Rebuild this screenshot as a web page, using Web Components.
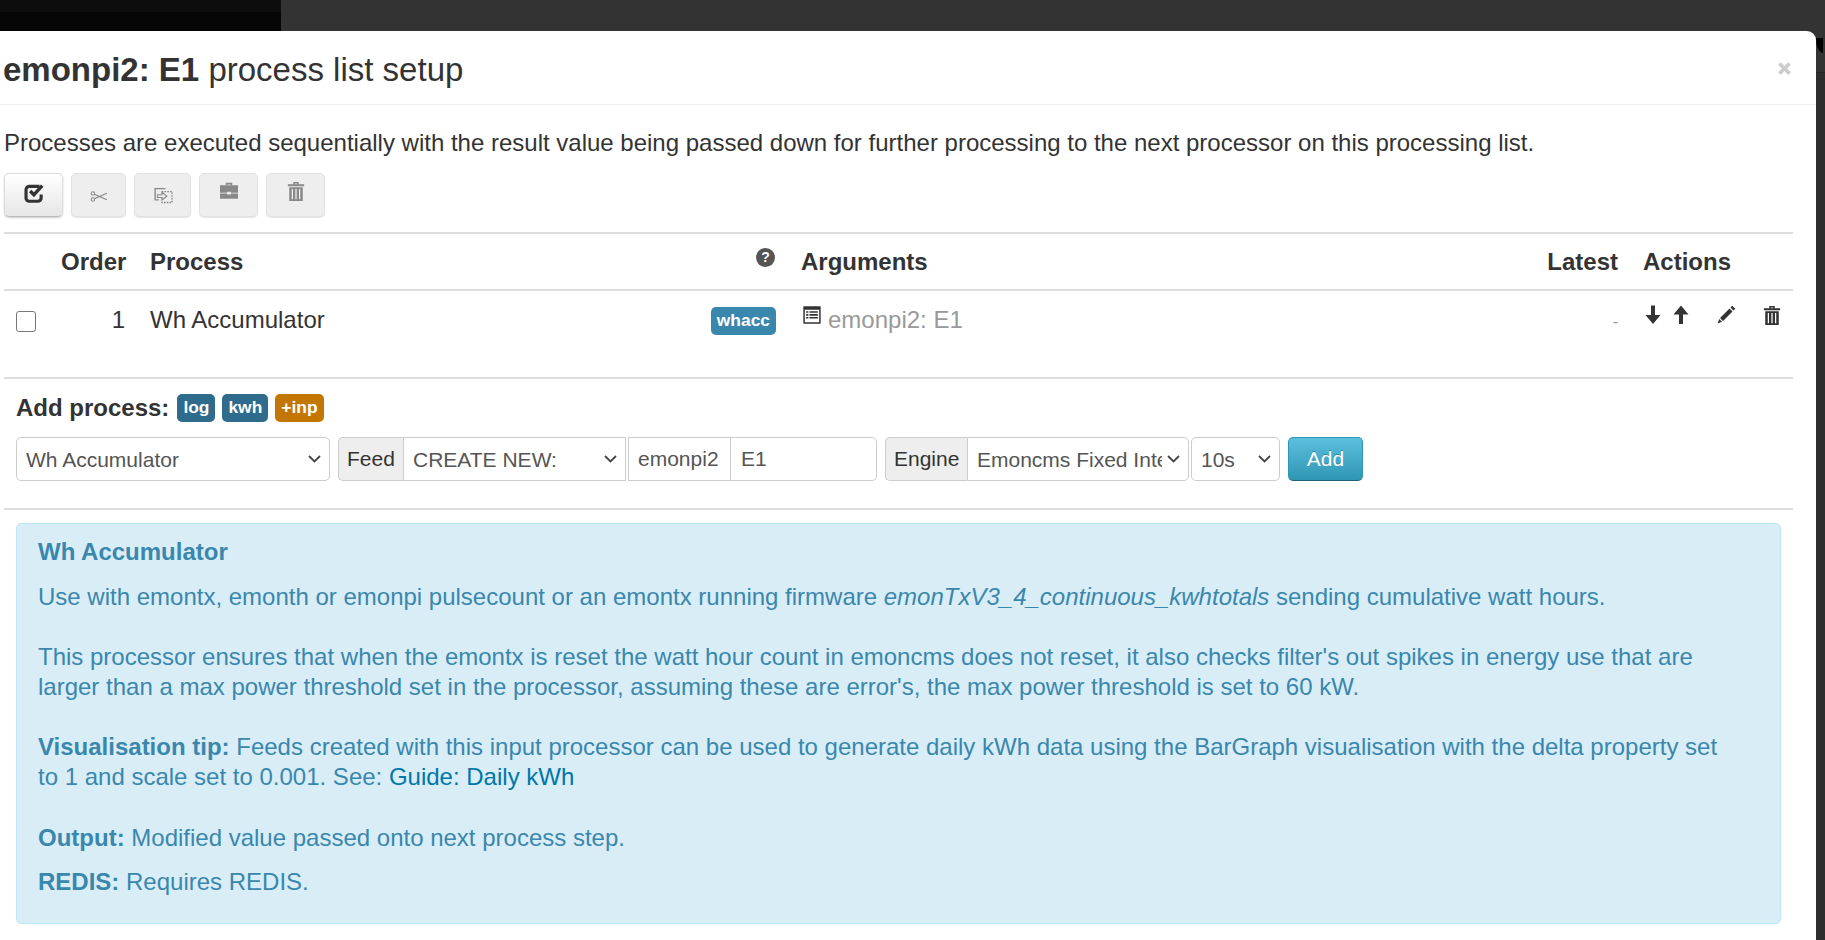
<!DOCTYPE html>
<html lang="en">
<head>
<meta charset="utf-8">
<title>emonpi2: E1 process list setup</title>
<style>
  html, body { margin: 0; padding: 0; height: 100%; }
  body { background: #333; font-family: "Liberation Sans", Arial, sans-serif; overflow: hidden; color: #333; }
</style>
</head>
<body>
<page-backdrop>
  <process-modal>
    <span slot="title"><b>emonpi2: E1</b> process list setup</span>
    <process-toolbar></process-toolbar>
    <process-table></process-table>
    <add-process></add-process>
    <process-info></process-info>
  </process-modal>
</page-backdrop>

<script>
const ICONS = {
    check: '<path d="M12 3.2H4.6A2.4 2.4 0 0 0 2.2 5.6v6a2.4 2.4 0 0 0 2.4 2.4h6.2a2.4 2.4 0 0 0 2.4-2.4V9" fill="none" stroke="currentColor" stroke-width="2.3"/><path d="M5.2 6.6l2.7 2.7L14 2.6" fill="none" stroke="currentColor" stroke-width="2.5"/>',
    cut: '<circle cx="2.6" cy="4.8" r="1.5" fill="none" stroke="currentColor" stroke-width=".9"/><circle cx="2.6" cy="10.2" r="1.5" fill="none" stroke="currentColor" stroke-width=".9"/><path d="M3.9 5.5L15 10.4M3.9 9.5L15 4.6" fill="none" stroke="currentColor" stroke-width="1"/>',
    share: '<path d="M10 2.1H1.7v9h3" fill="none" stroke="currentColor" stroke-width="1.1"/><path d="M7 4.5h8.2v8.7H6.5" fill="none" stroke="currentColor" stroke-width="1.1" stroke-dasharray="1.3 .9"/><path d="M3.6 7h3.6V5l3.8 3.1-3.8 3.1v-2H3.6z" fill="none" stroke="currentColor" stroke-width=".9"/>',
    briefcase: '<path d="M5.4 3.4V1.4h5.2v2h-1.4V2.7H6.8v.7z" fill="currentColor"/><path d="M.8 3.4h14.4v5.9H9.4V8.6H6.6v.7H.8zM.8 10h5.8v.8h2.8V10h5.8v4.2H.8z" fill="currentColor"/>',
    trash: '<path d="M1.5 2.6h13v1.5h-13zM5.8 2.6V.8h4.4v1.8H9V1.9H7v.7z" fill="currentColor"/><path fill-rule="evenodd" d="M2.6 4.9h10.8V16H2.6zM4.6 6.3v8.3h1V6.3zM7.5 6.3v8.3h1V6.3zM10.4 6.3v8.3h1V6.3z" fill="currentColor"/>',
    list: '<path fill-rule="evenodd" d="M.3.3h15.4v15.4H.3zM1.6 3.4v11h12.8v-11zM2.8 4.6h2v1.4h-2zM5.8 4.6h7.4v1.4H5.8zM2.8 7.2h2v1.4h-2zM5.8 7.2h7.4v1.4H5.8zM2.8 9.8h2v1.4h-2zM5.8 9.8h7.4v1.4H5.8z" fill="currentColor"/>',
    down: '<path d="M6.4 .4h3.2V8H14l-6 7.2L2 8h4.4z" fill="currentColor"/>',
    up: '<path d="M8 .4L14 7.6H9.6v7.6H6.4V7.6H2z" fill="currentColor"/>',
    pencil: '<path d="M13 .6l2.4 2.4-1.4 1.4-2.4-2.4zM10.8 2.8l2.4 2.4-7.6 7.6-2.4-2.4zM2.6 11.2l2.2 2.2-3.6 1.4z" fill="currentColor"/>',
    close: '<path d="M2 4.4L4.4 2 8 5.6 11.6 2 14 4.4 10.4 8 14 11.6 11.6 14 8 10.4 4.4 14 2 11.6 5.6 8z" fill="currentColor"/>'
};

class AppIcon extends HTMLElement {
    connectedCallback() {
        const size = this.getAttribute('size') || 16;
        const root = this.shadowRoot || this.attachShadow({ mode: 'open' });
        root.innerHTML = `
            <style>
                :host { display: inline-flex; line-height: 0; }
                svg { display: block; }
            </style>
            <svg width="${size}" height="${size}" viewBox="0 0 16 16">${ICONS[this.getAttribute('name')] || ''}</svg>
        `;
    }
}
customElements.define('app-icon', AppIcon);

class PageBackdrop extends HTMLElement {
    constructor() {
        super();
        this.attachShadow({ mode: 'open' }).innerHTML = `
            <style>
                :host { display: block; height: 100vh; background: #333; overflow: hidden; }
                .top { height: 31px; display: flex; }
                .nav { width: 281px; background: linear-gradient(#0d0d0d 12px, #060606 12px); }
                .grey { flex: 1; background: #333; }
                .main { display: flex; height: 909px; }
                .strip { flex: 1; background: linear-gradient(#333 41px, #262626 41px, #262626 42px, #2e2e2e 42px); }
                .blob { width: 7px; height: 15px; margin-top: 7px; background: #000; border-radius: 0 0 0 100%; }
            </style>
            <div class="top"><div class="nav"></div><div class="grey"></div></div>
            <div class="main"><slot></slot><div class="strip"><div class="blob"></div></div></div>
        `;
    }
}
customElements.define('page-backdrop', PageBackdrop);

class ProcessModal extends HTMLElement {
    constructor() {
        super();
        this.attachShadow({ mode: 'open' }).innerHTML = `
            <style>
                :host { display: block; width: 1816px; height: 909px; background: #fff; border-radius: 0 9px 0 0; overflow: hidden; flex: none; }
                header { height: 74px; box-sizing: border-box; border-bottom: 1px solid #eee; padding: 15px 3px 0; display: flex; justify-content: space-between; }
                h3 { margin: 0; font-size: 33px; line-height: 48px; font-weight: 400; color: #333; }
                .close { color: #ccc; margin: 14px 20px 0 0; align-self: flex-start; }
                .body { padding: 0 23px 0 4px; }
                p { margin: 0; font-size: 24px; line-height: 30px; padding-top: 23px; height: 45px; color: #333; }
            </style>
            <header>
                <h3><slot name="title"></slot></h3>
                <app-icon class="close" name="close" size="17"></app-icon>
            </header>
            <div class="body">
                <p>Processes are executed sequentially with the result value being passed down for further processing to the next processor on this processing list.</p>
                <slot></slot>
            </div>
        `;
    }
}
customElements.define('process-modal', ProcessModal);

class ProcessToolbar extends HTMLElement {
    constructor() {
        super();
        // name, button width, icon size, top offset of the icon, disabled
        const btns = [['check', 59, 22, 8, false], ['cut', 55, 18, 14, true], ['share', 57, 20, 12, true], ['briefcase', 59, 20, 7, true], ['trash', 59, 20, 7, true]];
        this.attachShadow({ mode: 'open' }).innerHTML = `
            <style>
                :host { display: flex; gap: 8px; height: 59px; align-items: flex-start; }
                button {
                    height: 44px; box-sizing: border-box; border-radius: 5px; display: flex; align-items: flex-start; justify-content: center;
                    border: 1px solid #ddd; border-bottom-color: #bbb; color: #333; padding-bottom: 0; padding-left: 0; padding-right: 0;
                    background: linear-gradient(#fff, #e6e6e6); box-shadow: 0 1px 2px rgba(0,0,0,.2);
                }
                button[disabled] { background: #eee; color: #888; box-shadow: 0 1px 1px rgba(0,0,0,.1); border-color: #e2e2e2; }
            </style>
            ${btns.map(([n, w, s, t, d]) => `<button style="width:${w}px;padding-top:${t}px" ${d ? 'disabled' : ''}><app-icon name="${n}" size="${s}"></app-icon></button>`).join('')}
        `;
    }
}
customElements.define('process-toolbar', ProcessToolbar);

class TagLabel extends HTMLElement {
    constructor() {
        super();
        this.attachShadow({ mode: 'open' }).innerHTML = `
            <style>
                :host {
                    display: inline-block; box-sizing: border-box; height: 28px; line-height: 27px; padding: 0 6px; border-radius: 5px;
                    font-size: 17.4px; font-weight: 700; color: #fff; background: var(--tag, #3a87ad);
                }
            </style>
            <slot></slot>
        `;
    }
}
customElements.define('tag-label', TagLabel);

class ProcessTable extends HTMLElement {
    constructor() {
        super();
        this.attachShadow({ mode: 'open' }).innerHTML = `
            <style>
                :host {
                    display: grid; grid-template-columns: 48px 89px 651px 748px 94px 159px; font-size: 24px;
                    border-bottom: 2px solid #ddd;
                }
                .row { display: contents; }
                .th, .td { box-sizing: border-box; }
                .th { height: 59px; border-top: 2px solid #ddd; border-bottom: 2px solid #ddd; font-weight: 700; line-height: 55px; padding-left: 9px; }
                .td { height: 86px; padding-top: 14px; line-height: 30px; }
                .chk { width: 20px; height: 21px; box-sizing: border-box; margin: 6px 0 0 12px; border: 1px solid #777; border-radius: 3px; background: #fff; }
                .right { text-align: right; padding-left: 0; }
                .proc { display: flex; justify-content: space-between; padding-left: 9px; padding-right: 16px; }
                .help { align-self: flex-start; margin: 14px 1px 0 0; width: 19px; height: 19px; border-radius: 50%; background: #555; color: #fff; font-size: 14px; font-weight: 700; line-height: 19px; text-align: center; }
                .args { color: #999; display: flex; gap: 7px; padding-left: 11px; }
                .args app-icon { color: #333; margin-top: 1px; align-self: flex-start; }
                tag-label { margin-top: 2px; }
                .acts { display: flex; align-items: flex-start; padding-left: 9px; color: #333; }
                .dash { padding-right: 16px; color: #999; font-size: 16px; padding-top: 16px; }
            </style>
            <div class="row">
                <div class="th"></div>
                <div class="th">Order</div>
                <div class="th proc"><span>Process</span><span class="help">?</span></div>
                <div class="th">Arguments</div>
                <div class="th right" style="padding-right:16px">Latest</div>
                <div class="th">Actions</div>
            </div>
            <div class="row">
                <div class="td"><div class="chk"></div></div>
                <div class="td right" style="padding-right:16px">1</div>
                <div class="td proc"><span>Wh Accumulator</span><tag-label>whacc</tag-label></div>
                <div class="td args"><app-icon name="list" size="18"></app-icon><span>emonpi2: E1</span></div>
                <div class="td right dash">-</div>
                <div class="td acts">
                    <app-icon name="down" size="20"></app-icon>
                    <app-icon name="up" size="20" style="margin-left:8px"></app-icon>
                    <app-icon name="pencil" size="20" style="margin-left:25px"></app-icon>
                    <app-icon name="trash" size="20" style="margin-left:26px"></app-icon>
                </div>
            </div>
        `;
    }
}
customElements.define('process-table', ProcessTable);

const CHEVRON = "url(\"data:image/svg+xml,%3Csvg xmlns='http://www.w3.org/2000/svg' width='13' height='8' viewBox='0 0 13 8'%3E%3Cpath d='M1 1l5.5 5.5L12 1' fill='none' stroke='%23444' stroke-width='1.8'/%3E%3C/svg%3E\")";

class AddProcess extends HTMLElement {
    constructor() {
        super();
        this.attachShadow({ mode: 'open' }).innerHTML = `
            <style>
                :host { display: block; height: 131px; box-sizing: border-box; padding: 15px 0 0 12px; border-bottom: 2px solid #ddd; font-size: 21px; }
                .title { display: flex; align-items: center; gap: 7px; height: 28px; font-size: 24px; font-weight: 700; }
                .title b { margin-right: 1px; }
                .controls { display: flex; margin-top: 15px; height: 44px; }
                .group { display: flex; margin-right: 8px; }
                .group.tight { margin-right: 2px; }
                select, input, .addon {
                    box-sizing: border-box; height: 44px; font: 21px "Liberation Sans", Arial, sans-serif; color: #555;
                    border: 1px solid #ccc; background-color: #fff; margin: 0; border-radius: 0; flex: none;
                }
                select {
                    appearance: none; -webkit-appearance: none; padding: 0 26px 0 9px;
                    background-image: ${CHEVRON}; background-repeat: no-repeat; background-position: right 8px center;
                }
                input { padding: 0 9px; outline: none; }
                .addon { background: #eee; color: #333; padding: 0 8px; line-height: 42px; border-right: 0; border-radius: 5px 0 0 5px; }
                .l { border-radius: 5px; }
                .r { border-radius: 0 5px 5px 0; }
                button {
                    width: 75px; height: 44px; box-sizing: border-box; color: #fff; font: 21px "Liberation Sans", Arial, sans-serif; border-radius: 5px;
                    border: 1px solid #2f96b4; border-bottom-color: #1f6377; background: linear-gradient(#5bc0de, #2f96b4); text-shadow: 0 -1px 0 rgba(0,0,0,.25);
                }
            </style>
            <div class="title"><b>Add process:</b>
                <tag-label style="--tag:#2f6b8c">log</tag-label>
                <tag-label style="--tag:#2f6b8c">kwh</tag-label>
                <tag-label style="--tag:#c47605">+inp</tag-label>
            </div>
            <div class="controls">
                <div class="group"><select class="l" style="width:314px"><option>Wh Accumulator</option></select></div>
                <div class="group">
                    <span class="addon" style="width:65px">Feed</span>
                    <select style="width:223px"><option>CREATE NEW:</option></select>
                    <input style="width:103px;margin-left:2px" value="emonpi2">
                    <input class="r" style="width:146px;border-left:0;padding-left:10px" value="E1">
                </div>
                <div class="group tight">
                    <span class="addon" style="width:82px">Engine</span>
                    <select class="r" style="width:222px"><option>Emoncms Fixed Interval TimeSeries</option></select>
                </div>
                <div class="group"><select class="l" style="width:89px"><option>10s</option></select></div>
                <button>Add</button>
            </div>
        `;
    }
}
customElements.define('add-process', AddProcess);

class ProcessInfo extends HTMLElement {
    constructor() {
        super();
        this.attachShadow({ mode: 'open' }).innerHTML = `
            <style>
                :host {
                    display: block; box-sizing: border-box; width: 1765px; height: 401px; margin: 13px 0 0 12px; padding: 13px 21px 0;
                    background: #d9edf7; border: 1px solid #bce8f1; border-radius: 5px; color: #3a87ad; font-size: 24px; line-height: 30px;
                }
                b.h { display: block; margin-bottom: 15px; }
                p { margin: 0 0 30px; }
                p.o { margin-bottom: 14px; }
                a { color: #0077aa; text-decoration: none; }
            </style>
            <b class="h">Wh Accumulator</b>
            <p>Use with emontx, emonth or emonpi pulsecount or an emontx running firmware <i>emonTxV3_4_continuous_kwhtotals</i> sending cumulative watt hours.</p>
            <p>This processor ensures that when the emontx is reset the watt hour count in emoncms does not reset, it also checks filter's out spikes in energy use that are<br>larger than a max power threshold set in the processor, assuming these are error's, the max power threshold is set to 60 kW.</p>
            <p style="margin-bottom:31px"><b>Visualisation tip:</b> Feeds created with this input processor can be used to generate daily kWh data using the BarGraph visualisation with the delta property set<br>to 1 and scale set to 0.001. See: <a href="#">Guide: Daily kWh</a></p>
            <p class="o"><b>Output:</b> Modified value passed onto next process step.</p>
            <p class="o"><b>REDIS:</b> Requires REDIS.</p>
        `;
    }
}
customElements.define('process-info', ProcessInfo);
</script>
</body>
</html>
